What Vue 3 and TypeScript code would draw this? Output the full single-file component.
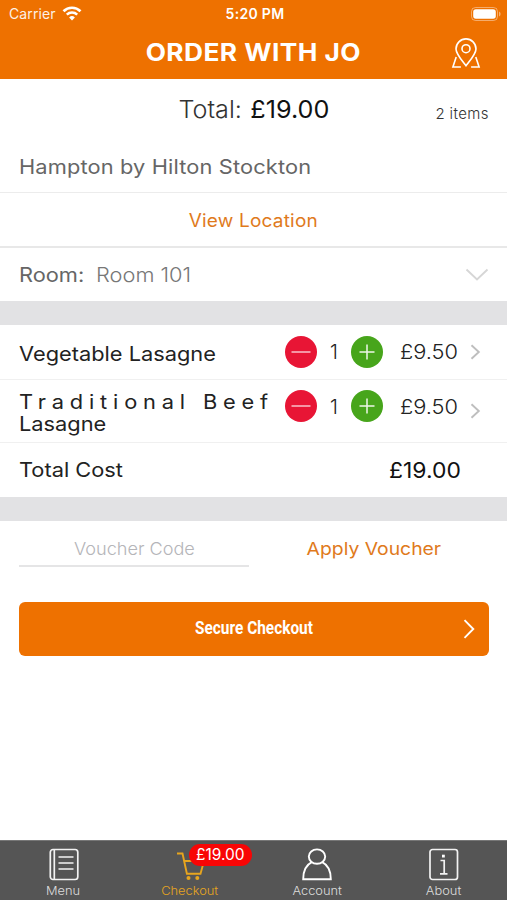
<script setup lang="ts">
interface OrderLine {
  name: string[]
  quantity: number
  price: string
  tall: boolean
}

const lines: OrderLine[] = [
  { name: ['Vegetable Lasagne'], quantity: 1, price: '£9.50', tall: false },
  { name: ['Traditional Beef', 'Lasagne'], quantity: 1, price: '£9.50', tall: true },
]
</script>

<template>
  <div class="screen">
    <header class="top">
      <div class="status">
        <div class="carrier">
          <span class="carrier-name">Carrier</span>
          <svg width="20" height="15" viewBox="0 0 20 15" fill="none" stroke="#fff">
            <path d="M1.500 5.200a12.200 12.200 0 0 1 17 0" stroke-width="2.700" />
            <path d="M4.800 8.700a7.500 7.500 0 0 1 10.400 0" stroke-width="2.500" />
            <path d="M10 14.400 7.100 11.500a4.200 4.200 0 0 1 5.800 0z" fill="#fff" stroke="none" />
          </svg>
        </div>
        <span class="clock">5:20 PM</span>
        <svg class="battery" width="30" height="14" viewBox="0 0 30 14">
          <rect x="0.500" y="0.500" width="26" height="13" rx="4" fill="none" stroke="#fff" stroke-opacity=".42" />
          <rect x="2.200" y="2.300" width="22.600" height="9.400" rx="2.600" fill="#fff" />
          <path d="M28 4.600v4.800c2.100-.9 2.100-3.900 0-4.800z" fill="#fff" fill-opacity=".45" />
        </svg>
      </div>
      <div class="title-bar">
        <h1 class="title">ORDER WITH JO</h1>
        <svg class="pin" width="30" height="31" viewBox="0 0 30 31" fill="none" stroke="#fff" stroke-width="1.600">
          <path d="M15 27.800C11.500 23.200 5 15.800 5 10.900a10 10 0 0 1 20 0C25 15.800 18.500 23.200 15 27.800z" />
          <circle cx="15" cy="10.700" r="4" />
          <path d="M5.200 18.900 1.900 29h8M24.800 18.900 28.100 29h-8" />
        </svg>
      </div>
    </header>

    <section class="summary">
      <div class="total"><span class="total-label">Total:</span><span class="total-value">£19.00</span></div>
      <span class="count">2 items</span>
    </section>
    <div class="hotel"><span class="wide">Hampton by Hilton Stockton</span></div>
    <div class="location"><span class="wide-center">View Location</span></div>
    <div class="room">
      <span class="room-label wide">Room:</span>
      <span class="room-value wide">Room 101</span>
      <svg class="chevron-down" width="24" height="14" viewBox="0 0 24 14" fill="none" stroke="#d6d6d6" stroke-width="1.900">
        <path d="M1.500 1.500 12 11.500 22.500 1.500" />
      </svg>
    </div>

    <div class="band"></div>

    <div v-for="line in lines" :key="line.name[0]" class="line" :class="{ tall: line.tall }">
      <div class="name">
        <span v-for="part in line.name" :key="part" class="wide" :class="{ spread: part === 'Traditional Beef' }">{{ part }}</span>
      </div>
      <svg class="round" width="32" height="32" viewBox="0 0 32 32">
        <circle cx="16" cy="16" r="16" fill="#e81535" />
        <path d="M6.500 16h19" stroke="#fff" stroke-opacity=".85" stroke-width="1.300" />
      </svg>
      <span class="quantity">{{ line.quantity }}</span>
      <svg class="round" width="32" height="32" viewBox="0 0 32 32">
        <circle cx="16" cy="16" r="16" fill="#47a51b" />
        <path d="M8.500 16h15M16 8.500v15" stroke="#fff" stroke-opacity=".9" stroke-width="1.500" />
      </svg>
      <span class="price wide">{{ line.price }}</span>
      <svg class="chevron" width="11" height="16" viewBox="0 0 11 16" fill="none" stroke="#bebebe" stroke-width="1.900">
        <path d="M1.500 1.300 8.800 8 1.500 14.700" />
      </svg>
    </div>
    <div class="cost">
      <span class="cost-label wide">Total Cost</span>
      <span class="cost-value">£19.00</span>
    </div>

    <div class="band"></div>

    <div class="voucher">
      <div class="voucher-field"><span class="voucher-hint">Voucher Code</span></div>
      <div class="apply"><span class="apply-label">Apply Voucher</span></div>
    </div>

    <button class="checkout" type="button">
      <span class="checkout-label">Secure Checkout</span>
      <svg class="checkout-arrow" width="12" height="20" viewBox="0 0 12 20" fill="none" stroke="#fff" stroke-width="1.900">
        <path d="M1.500 1.200 10.300 10 1.500 18.800" />
      </svg>
    </button>

    <nav class="tabs">
      <div class="tab">
        <svg width="32" height="33" viewBox="0 0 32 33" fill="none" stroke="#f2f2f2" stroke-width="1.700">
          <rect x="3.300" y="1.500" width="27.500" height="30" rx="2.700" />
          <path d="M7.300 1.500v30" />
          <path d="M11.500 9h15M11.500 15h15M11.500 21h15" />
        </svg>
        <span class="tab-label">Menu</span>
      </div>
      <div class="tab active">
        <svg width="32" height="33" viewBox="0 0 32 33" fill="none" stroke="#e7a51e" stroke-width="1.900">
          <path d="M3 5.500h5.500l4.400 20.300h13.600L30 13H10" />
          <circle cx="14.500" cy="30" r="2" fill="#e7a51e" stroke="none" />
          <circle cx="23.300" cy="30" r="2" fill="#e7a51e" stroke="none" />
        </svg>
        <span class="tab-label">Checkout</span>
        <span class="badge">£19.00</span>
      </div>
      <div class="tab">
        <svg width="32" height="33" viewBox="0 0 32 33" fill="none" stroke="#fff" stroke-width="1.900">
          <ellipse cx="16" cy="8.600" rx="8.200" ry="7.200" />
          <path d="M10.800 14.200C5.500 16.800 2.200 21.500 2.200 31.300h27.600C29.800 21.500 26.500 16.800 21.200 14.200" />
        </svg>
        <span class="tab-label">Account</span>
      </div>
      <div class="tab">
        <svg width="32" height="33" viewBox="0 0 32 33" fill="none" stroke="#f2f2f2" stroke-width="1.700">
          <rect x="2" y="1.500" width="27.500" height="30" rx="2.500" />
          <path d="M12.500 12.500h3.700v13.300M12 25.800h7.500" />
          <rect x="14" y="6.700" width="2.800" height="2.800" fill="#fff" stroke="none" />
        </svg>
        <span class="tab-label">About</span>
      </div>
    </nav>
  </div>
</template>

<style>
body {
  margin: 0;
  background: #fff;
}
</style>

<style scoped>
.screen {
  display: flex;
  flex-direction: column;
  box-sizing: border-box;
  width: 507px;
  height: 900px;
  overflow: hidden;
  background: #fff;
  font-family: Inter, "Liberation Sans", sans-serif;
  white-space: nowrap;
}
.screen > * {
  flex: none;
  box-sizing: border-box;
}
svg {
  display: block;
  flex: none;
}
.wide {
  display: inline-block;
  transform: scaleX(1.09);
  transform-origin: left center;
}
.wide-center {
  display: inline-block;
  transform: scaleX(1.055);
}
.top {
  height: 79px;
  background: #ee7100;
  color: #fff;
}
.status {
  display: grid;
  grid-template-columns: 1fr auto 1fr;
  align-items: center;
  height: 27px;
  padding: 0 6px 0 9px;
  font-size: 14px;
}
.carrier {
  display: flex;
  align-items: center;
  gap: 6px;
}
.carrier-name {
  letter-spacing: 0.1px;
  opacity: 0.9;
}
.clock {
  font-weight: 600;
  letter-spacing: 0.3px;
}
.battery {
  justify-self: end;
}
.title-bar {
  display: grid;
  grid-template-columns: 1fr auto 1fr;
  align-items: center;
  height: 52px;
  padding: 0 26px;
}
.title {
  grid-column: 2;
  margin: 0;
  font-size: 24px;
  font-weight: 700;
  line-height: 52px;
  letter-spacing: 0.4px;
  transform: scaleX(1.095);
}
.pin {
  justify-self: end;
}
.summary {
  display: grid;
  grid-template-columns: 1fr auto 1fr;
  align-items: center;
  height: 61px;
  padding: 0 18px;
}
.total {
  grid-column: 2;
  display: flex;
  gap: 8px;
  font-size: 24px;
  color: #111;
  transform: scaleX(1.05);
}
.total-label {
  font-weight: 300;
  color: #333;
}
.count {
  justify-self: end;
  padding-top: 7px;
  font-size: 15px;
  font-weight: 300;
  color: #333;
  letter-spacing: 0.4px;
}
.hotel {
  height: 53px;
  padding-left: 19px;
  border-bottom: 1px solid #ececec;
  line-height: 54px;
  font-size: 20px;
  color: #666;
  letter-spacing: 0.13px;
}
.location {
  height: 55px;
  border-bottom: 2px solid #e8e8e8;
  line-height: 55px;
  font-size: 18px;
  color: #e07a1c;
  letter-spacing: 0.2px;
  text-align: center;
}
.room {
  display: flex;
  align-items: center;
  height: 53px;
  padding: 0 18px 0 19px;
  font-size: 20px;
  color: #666;
}
.room-label {
  width: 77px;
}
.room-value {
  font-weight: 300;
  color: #777;
}
.chevron-down {
  margin-left: auto;
}
.band {
  height: 24px;
  background: #e2e2e4;
}
.line {
  display: flex;
  align-items: center;
  height: 55px;
  padding-left: 19px;
  border-bottom: 1px solid #f0f0f0;
  font-size: 20px;
  color: #222;
}
.name {
  display: flex;
  flex-direction: column;
  width: 266px;
  line-height: 22px;
  padding-top: 3px;
}
.tall {
  height: 63px;
  align-items: flex-start;
}
.tall .name {
  padding-top: 11px;
}
.spread {
  letter-spacing: 5.35px;
}
.quantity {
  width: 34px;
  text-align: center;
  font-weight: 300;
}
.price {
  width: 60px;
  margin-left: 17px;
  font-weight: 300;
}
.tall .round {
  margin-top: 10px;
}
.tall .quantity,
.tall .price {
  line-height: 55px;
}
.chevron {
  margin-left: 10px;
}
.tall .chevron {
  margin-top: 23px;
}
.cost {
  display: flex;
  justify-content: space-between;
  height: 54px;
  padding: 0 46px 0 19px;
  line-height: 55px;
  font-size: 20px;
  color: #222;
}
.cost-value {
  font-size: 21px;
  color: #111;
  transform: scaleX(1.09);
  transform-origin: right center;
}
.voucher {
  display: flex;
  align-items: flex-start;
  height: 81px;
  padding-left: 19px;
  font-size: 17.5px;
}
.voucher-field {
  box-sizing: border-box;
  flex: none;
  width: 230px;
  height: 46px;
  border-bottom: 2px solid #e5e5e6;
  line-height: 55px;
  text-align: center;
  font-weight: 300;
  color: #b5b5b9;
}
.voucher-hint {
  display: inline-block;
  transform: scaleX(1.035);
}
.apply {
  flex: none;
  width: 250px;
  line-height: 55px;
  text-align: center;
  color: #e07a1c;
}
.apply-label {
  display: inline-block;
  transform: scaleX(1.105);
}
.checkout {
  display: grid;
  grid-template-columns: 1fr auto 1fr;
  align-items: center;
  width: 470px;
  height: 54px;
  margin: 0 0 0 19px;
  padding: 0 14px;
  border: 0;
  border-radius: 6px;
  background: #ee7100;
  color: #fff;
}
.checkout-label {
  grid-column: 2;
  padding-bottom: 2px;
  font-family: Roboto, "Liberation Sans", sans-serif;
  font-size: 17.5px;
  font-weight: 700;
  transform: scaleX(0.88);
}
.checkout-arrow {
  justify-self: end;
}
.tabs {
  display: grid;
  grid-template-columns: repeat(4, 1fr);
  height: 60px;
  margin-top: auto;
  border-top: 1px solid #777;
  background: #555;
}
.tab {
  position: relative;
  display: flex;
  flex-direction: column;
  align-items: center;
  padding-top: 7px;
  font-size: 12px;
  line-height: 20px;
  font-weight: 300;
  color: #ddd;
}
.tab-label {
  transform: scaleX(1.07);
}
.active {
  color: #e7a51e;
}
.badge {
  position: absolute;
  top: 3px;
  left: 62px;
  box-sizing: border-box;
  width: 63px;
  height: 22px;
  border-radius: 11px;
  background: #f80505;
  color: #fff;
  text-align: center;
  font-size: 15.5px;
  font-weight: 400;
  line-height: 22px;
}
</style>
